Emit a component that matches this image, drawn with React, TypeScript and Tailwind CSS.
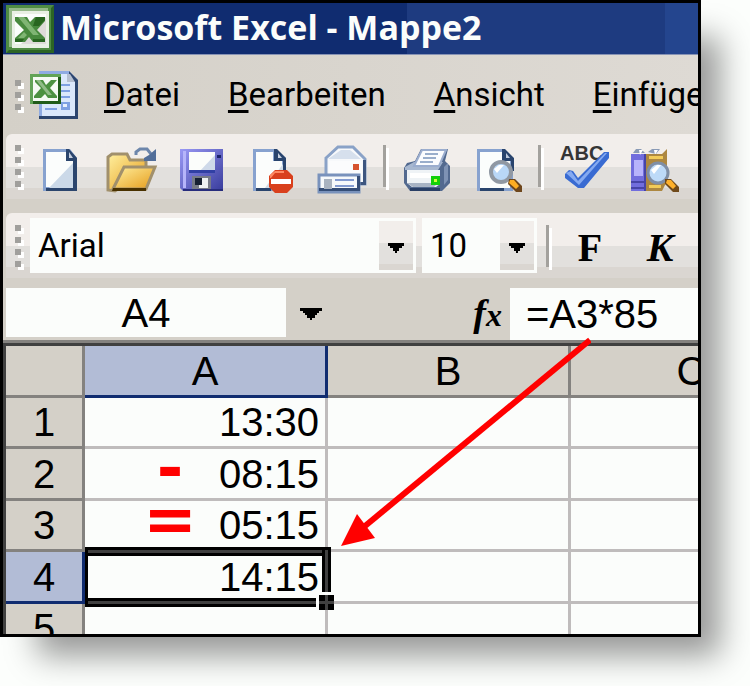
import { useState } from 'react';
import type { ReactNode } from 'react';

type IconProps = { children: ReactNode };

function Icon({ children }: IconProps) {
  return (
    <svg viewBox="0 0 48 48" className="h-12 w-12 shrink-0 overflow-visible" aria-hidden="true">
      {children}
    </svg>
  );
}

function AppIcon() {
  return (
    <Icon>
      <rect width="48" height="48" fill="#4f8c42" />
      <path d="M0 48h48V0l-3 3v42H3z" fill="#2c6424" />
      <path d="M3 3h39v3H6v36H3z" fill="#93b887" />
      <rect x="6" y="6" width="37" height="37" fill="#e9f0e4" />
      <rect x="9" y="9" width="31" height="30" fill="#fbfdfb" />
      <path d="M40 12v27H15z" fill="#dedbd8" />
      <path
        d="M9 12h12l3 5 5-5h10v4l-8 9 8 8v4H27l-4-5-4 5H9v-4l9-8-9-9z"
        fill="#47893d"
      />
      <path d="M12 12h6l15 18h-6zM12 33l6-6 3 3-3 3z" fill="#7fb573" />
      <path d="M30 12h9v3l-6 6h-6zM9 34h9l-2 3H9zM27 34h12v3H27z" fill="#28651f" />
    </Icon>
  );
}

function WorkbookIcon() {
  return (
    <Icon>
      <path d="M9 0h30l9 9v39H9z" fill="#8fabe2" />
      <path d="M12 3h25v8h8v34H12z" fill="#dbe8fb" />
      <path d="M39 0l9 9v39H9v-3h36V11h-6z" fill="#2c456e" />
      <path d="M37 3l3 0 5 8h-8z" fill="#b5bfd0" />
      <path d="M31 13h9v2h-9zM31 19h9v2h-9zM31 25h9v2h-9zM31 31h9v8h-9zM15 37h12v2H15z" fill="#7fa1e3" />
      <rect x="33" y="33" width="4" height="3" fill="#e8f0fd" />
      <rect y="3" width="31" height="30" fill="#37822d" />
      <path d="M0 3h31v3H3v27H0z" fill="#62a356" />
      <path d="M28 6h3v27H3v-3h25z" fill="#205c19" />
      <rect x="3" y="6" width="25" height="24" fill="#f5faf3" />
      <path d="M5 9h8l3 5 5-5h6l-7 8 7 8v2h-9l-3-4-4 4H4v-2l7-8-6-6z" fill="#4c9140" />
      <path d="M6 9h4l12 15h-4z" fill="#91bc87" />
    </Icon>
  );
}

function NewIcon() {
  return (
    <Icon>
      <path d="M7 4h27l7 9v33H7z" fill="#87a2cf" />
      <path d="M10 7h20v9h8v26H10z" fill="#fbfdfc" />
      <path d="M38 17v26H13z" fill="#cbd9e8" />
      <path d="M30 4h3l8 9v33H10v-3h27V16h-7z" fill="#2b456d" />
      <path d="M33 7l4 6h-4z" fill="#c5cfdf" />
    </Icon>
  );
}

function OpenIcon() {
  return (
    <Icon>
      <defs>
        <linearGradient id="folder" x2="1" y2="1">
          <stop stopColor="#fff0a0" />
          <stop offset="1" stopColor="#e69b18" />
        </linearGradient>
      </defs>
      <path d="M1 45V12l4-3h15l3 6h16v9L8 46z" fill="url(#folder)" stroke="#a1906c" strokeWidth="3" />
      <path d="M6 44l11-22h31l-9 22z" fill="url(#folder)" stroke="#a1906c" strokeWidth="3" />
      <path d="M6 43h33v3H5z" fill="#493100" />
      <path d="M29 10v-3l4-3h7l4 5" fill="none" stroke="#6d86ab" strokeWidth="3" />
      <path d="M49 4v12H37v-3l5-3z" fill="#526e99" />
    </Icon>
  );
}

function SaveIcon() {
  return (
    <Icon>
      <defs>
        <linearGradient id="disk" x2="1" y2="1">
          <stop stopColor="#9a99f5" />
          <stop offset="1" stopColor="#383c9c" />
        </linearGradient>
      </defs>
      <path d="M2 4h43v42H5l-3-3z" fill="url(#disk)" />
      <path d="M5 6h3v37H5z" fill="#b6b5fa" />
      <path d="M11 7h26v20H11z" fill="#fbfdfb" />
      <path d="M37 10v17H21z" fill="#ced9e9" />
      <path d="M11 25h26v3H11z" fill="#3140a4" />
      <path d="M39 10h4v3h-4z" fill="#1c246b" />
      <path d="M14 31h19v13H14z" fill="#777b88" />
      <path d="M17 33h7v7h-7z" fill="#172033" />
      <path d="M24 33h6v10h-9v-3h3z" fill="#eef1f3" />
      <path d="M5 44h40v2H5z" fill="#272c7c" />
    </Icon>
  );
}

function PermissionIcon() {
  return (
    <Icon>
      <path d="M4 4h23l10 9v33H4z" fill="#87a2cf" />
      <path d="M7 7h17v9h9v27H7z" fill="#fbfdfc" />
      <path d="M34 19v24H16z" fill="#d0dce8" />
      <path d="M25 4h3l9 9v12h-3v-9h-9zM7 43h15v3H7z" fill="#29446d" />
      <path d="M29 8l4 5h-4z" fill="#c6d0df" />
      <path d="M26 25h12l6 6v11l-6 6H26l-6-6V31z" fill="#d9401d" />
      <path d="M26 26h9v2h-9l-4 5h-1v-3z" fill="#ff8962" />
      <path d="M22 34h20v5H22z" fill="#fff" />
    </Icon>
  );
}

function MailIcon() {
  return (
    <Icon>
      <path d="M6 13L18 2h15l12 12v25H6z" fill="#f7f9fb" stroke="#8aa2c7" strokeWidth="3" />
      <path d="M8 14l13-9h9l11 9z" fill="#d6e0ed" />
      <path d="M9 16h33v15H9z" fill="#fbfcfd" />
      <path d="M43 15h3v25h-6v-3h3z" fill="#3d5680" />
      <path d="M33 19h6v6h-6z" fill="#d6532e" />
      <path d="M-1 30h40v17H-1z" fill="#f6f9fb" stroke="#7992bc" strokeWidth="3" />
      <path d="M-1 46h41V31h-3v12H-1z" fill="#354e78" />
      <path d="M4 34h8v10H4z" fill="#a9b3c0" />
      <path d="M15 34h19v2H15zM15 40h19v2H15z" fill="#839bd0" />
    </Icon>
  );
}

function PrintIcon() {
  return (
    <Icon>
      <path d="M0 23l3-5 8-2 6-12h27l-3 12 5 5v17l-8 8H6l-6-8z" fill="#52698f" />
      <path d="M1 22l9-5h29l-5 8H1z" fill="#a8b8d0" />
      <path d="M18 5h24l-7 16H10z" fill="#fbfcfe" stroke="#9badce" strokeWidth="2" />
      <path d="M21 9h13M19 13h13M16 17h13" stroke="#9aaecb" strokeWidth="2" />
      <path d="M3 25h33v14l-4 3H8l-5-4z" fill="#eff3f6" />
      <path d="M6 28h21v5H6z" fill="#fff" />
      <path d="M3 38h31l-4 4H9z" fill="#a8b4c5" />
      <path d="M27 31h9v9h-9z" fill="#12cf08" />
      <path d="M30 34h3v3h-3z" fill="#ccff38" />
      <path d="M6 43h30v3H6z" fill="#293f66" />
      <path d="M40 22l4-4v17l-4 5z" fill="#7e92b4" />
    </Icon>
  );
}

function PreviewIcon() {
  return (
    <Icon>
      <path d="M2 4h27l9 9v33H2z" fill="#87a2cf" />
      <path d="M5 7h22v9h8v27H5z" fill="#fbfdfc" />
      <path d="M27 4h3l9 9v13h-3V16h-9zM5 43h24v3H5z" fill="#29446d" />
      <path d="M31 8l4 5h-4z" fill="#bfcbdd" />
      <circle cx="26" cy="27" r="10" fill="#b9d7f7" stroke="#9098a3" strokeWidth="4" />
      <path d="M19 24l5-4h5l-7 8z" fill="#fff" />
      <path d="M34 34h6l7 7v6h-6l-8-8z" fill="#6e461c" />
      <path d="M35 35h4l5 6-3 3-7-6z" fill="#ffae23" />
    </Icon>
  );
}

function SpellingIcon() {
  return (
    <Icon>
      <text x="1" y="15" fontSize="20" fontWeight="bold" fill="#353535" className="font-['Liberation_Sans']">
        ABC
      </text>
      <path d="M6 29l4-4 4 1 5 7L45 7h5v6L25 43h-6L6 33z" fill="#396bd2" />
      <path d="M7 28l5-2 7 10L46 8l2 0-28 32z" fill="#85aaf1" />
    </Icon>
  );
}

function ResearchIcon() {
  return (
    <Icon>
      <path d="M1 9h15v37H1z" fill="#716ddd" />
      <path d="M4 15h9v16H4z" fill="#b7b3fb" />
      <path d="M1 36h15v2H1zM1 42h15v2H1zM14 9h2v37h-2z" fill="#4744a7" />
      <path d="M3 8l3-4h5l4 4zM18 7l4-3h8l-4 5z" fill="#899ab6" />
      <path d="M9 5l4 0-3 5zM24 5l4 0-3 5z" fill="#fff" />
      <path d="M16 9h16l5-5v32l-5 10H16z" fill="#ad8740" />
      <path d="M19 11h14v3H19zM19 40h12v3H19z" fill="#f2cb58" />
      <circle cx="28" cy="28" r="10" fill="#bddaf8" stroke="#7f8ea5" strokeWidth="3" />
      <path d="M21 25l6-5h4l-7 9z" fill="#fff" />
      <path d="M35 34h6l8 8v5h-6l-8-8z" fill="#704a1b" />
      <path d="M37 35h4l5 6-3 3-7-6z" fill="#ffb12b" />
    </Icon>
  );
}

function Grip({ dots }: { dots: number }) {
  return (
    <div className="flex w-[6px] shrink-0 flex-col gap-[6px]">
      {Array.from({ length: dots }, (_, i) => (
        <span key={i} className="h-[6px] w-[6px] bg-[#a09f9c] shadow-[3px_3px_0_#ffffff]" />
      ))}
    </div>
  );
}

function Separator() {
  return <div className="mr-[6px] ml-1 h-[42px] w-[3px] shrink-0 bg-[#a3a19d] shadow-[3px_3px_0_#ffffff]" />;
}

function Caret() {
  return (
    <svg viewBox="0 0 16 10" className="h-[10px] w-4" aria-hidden="true">
      <path d="M0 0h16v3h-2v2h-3v3H9v2H7V8H5V5H2V3H0z" />
    </svg>
  );
}

function ToolButton({ label, children }: { label: string; children: ReactNode }) {
  return (
    <button type="button" aria-label={label} className="flex w-[71px] shrink-0 justify-center">
      {children}
    </button>
  );
}

type ComboProps = {
  label: string;
  options: string[];
  className: string;
};

function Combo({ label, options, className }: ComboProps) {
  return (
    <div className={`relative h-[55px] shrink-0 bg-[#fbfdfb] ${className}`}>
      <select
        aria-label={label}
        className="h-full w-full appearance-none bg-transparent pt-px pl-2 text-[33px] leading-10 outline-none"
      >
        {options.map((o) => (
          <option key={o}>{o}</option>
        ))}
      </select>
      <span className="pointer-events-none absolute inset-y-[3px] right-[3px] flex w-[34px] items-center justify-center bg-[linear-gradient(#f2eeeb_0_22px,#e2e0dd_22px_43px,#dad6d1_43px)] pt-1">
        <Caret />
      </span>
    </div>
  );
}

const toolbarBg =
  'bg-[linear-gradient(#f2eeeb_0_33px,#e2e0dd_33px_54px,#dad6d1_54px)] rounded-tl-md';

const rows = [
  { id: 1, op: '', value: '13:30' },
  { id: 2, op: '-', value: '08:15' },
  { id: 3, op: '=', value: '05:15' },
  { id: 4, op: '', value: '14:15' },
];

function Selection() {
  return (
    <div className="pointer-events-none absolute -top-[5px] -right-[6px] -bottom-[6px] left-0 z-10 border-y-[9px] border-r-[9px] border-l-[3px] border-black">
      <span className="absolute -top-[6px] right-0 left-0 h-[3px] bg-[#404040]" />
      <span className="absolute right-0 -bottom-[6px] left-0 h-[3px] bg-[#404040]" />
      <span className="absolute -top-[6px] -right-[6px] bottom-0 w-[3px] bg-[#404040]" />
      <span className="absolute -right-[12px] -bottom-[12px] h-[18px] w-[18px] bg-[#fbfdfb]" />
      <span className="absolute -right-[12px] -bottom-[12px] h-[15px] w-[15px] bg-black" />
      <span className="absolute -right-[12px] -bottom-[6px] h-[3px] w-[15px] bg-[#404040]" />
      <span className="absolute -right-[6px] -bottom-[12px] h-[15px] w-[3px] bg-[#404040]" />
    </div>
  );
}

function Sheet() {
  const line = 'border-r-[3px] border-b-[3px] border-[#bfbcbc]';
  const head = 'border-r-[3px] border-b-[3px] font-normal';
  const grayHead = 'border-[#84827f] bg-[#d4d0c8]';
  const activeHead = 'border-[#102c70] bg-[#b2bcd6]';

  return (
    <table className="w-[808px] table-fixed border-separate border-spacing-0 border-l-[3px] border-[#404040] text-[40px] leading-[48px]">
      <colgroup>
        <col className="w-[79px]" />
        <col className="w-[243px]" />
        <col className="w-[243px]" />
        <col className="w-[243px]" />
      </colgroup>
      <thead>
        <tr className="h-[52px]">
          <td className={`${head} ${grayHead}`} />
          <th scope="col" className={`${head} ${activeHead}`}>A</th>
          <th scope="col" className={`${head} ${grayHead}`}>B</th>
          <th scope="col" className={`${head} ${grayHead}`}>C</th>
        </tr>
      </thead>
      <tbody>
        {rows.map((row) => {
          const active = row.id === 4;
          return (
            <tr key={row.id} className={row.id % 2 ? 'h-[51px]' : 'h-[52px]'}>
              <th scope="row" className={`${head} ${active ? activeHead : grayHead}`}>
                {row.id}
              </th>
              <td className={`relative ${line}`}>
                <div className="flex h-12 items-start justify-end pr-[6px]">
                  {row.op && (
                    <span className="ml-9 flex-1 text-center font-['DejaVu_Sans',sans-serif] text-[64px] leading-[36px] font-bold text-[#ff0000]">
                      {row.op}
                    </span>
                  )}
                  <span>{row.value}</span>
                </div>
                {active && <Selection />}
              </td>
              <td className={line} />
              <td className={line} />
            </tr>
          );
        })}
        <tr>
          <th scope="row" className="border-r-[3px] border-[#84827f] bg-[#d4d0c8] font-normal">
            <div className="h-[30px] overflow-hidden">5</div>
          </th>
          <td className="border-r-[3px] border-[#bfbcbc]" />
          <td className="border-r-[3px] border-[#bfbcbc]" />
          <td />
        </tr>
      </tbody>
    </table>
  );
}

export default function App() {
  const [cell, setCell] = useState('A4');
  const [formula, setFormula] = useState('=A3*85');

  return (
    <div className="overflow-hidden bg-[#fcfefc] pr-[49px] pb-[49px] font-['Liberation_Sans',Arial,sans-serif] text-black">
      <div className="relative border-[3px] border-black shadow-[28px_28px_30px_-9px_rgba(0,0,0,0.4)]">
        <div className="overflow-hidden bg-[#fbfdfb]">
          <header className="flex h-[52px] items-center gap-[6px] border-b border-[#8793b5] bg-[linear-gradient(90deg,#102c70_0_404px,#1e3b80_404px_662px,#24458e_662px)] pl-[3px]">
            <AppIcon />
            <h1 className="pb-1 font-['Open_Sans',sans-serif] text-[34px] leading-10 font-bold whitespace-nowrap text-[#fbfdfb]">
              Microsoft Excel - Mappe2
            </h1>
          </header>

          <div className="bg-[#d4d0c8] font-[Roboto,sans-serif]">
            <nav className="flex h-[79px] items-center bg-linear-to-r from-[#d4d0c8] to-[#dedad4] pl-3 text-[33px] leading-10">
              <Grip dots={3} />
              <div className="ml-[9px]">
                <WorkbookIcon />
              </div>
              <div className="ml-[26px] flex gap-12 whitespace-nowrap [&_u]:decoration-[3px] [&_u]:underline-offset-4">
                <button type="button"><u>D</u>atei</button>
                <button type="button"><u>B</u>earbeiten</button>
                <button type="button"><u>A</u>nsicht</button>
                <button type="button">
                  <u>E</u>infü<u>g</u>en
                </button>
              </div>
            </nav>

            <div className="pl-[3px]">
              <div className={`flex h-[65px] items-start pt-[11px] pl-[9px] ${toolbarBg}`} role="toolbar" aria-label="Standard">
                <Grip dots={4} />
                <div className="ml-[3px] flex items-start">
                  <ToolButton label="Neu"><NewIcon /></ToolButton>
                  <ToolButton label="Öffnen"><OpenIcon /></ToolButton>
                  <ToolButton label="Speichern"><SaveIcon /></ToolButton>
                  <ToolButton label="Berechtigung"><PermissionIcon /></ToolButton>
                  <ToolButton label="E-Mail"><MailIcon /></ToolButton>
                  <Separator />
                  <ToolButton label="Drucken"><PrintIcon /></ToolButton>
                  <ToolButton label="Seitenansicht"><PreviewIcon /></ToolButton>
                  <Separator />
                  <ToolButton label="Rechtschreibung"><SpellingIcon /></ToolButton>
                  <ToolButton label="Recherchieren"><ResearchIcon /></ToolButton>
                </div>
              </div>
              <div className={`mt-[14px] flex h-[65px] items-center pl-[9px] ${toolbarBg}`} role="toolbar" aria-label="Format">
                <Grip dots={4} />
                <Combo label="Schriftart" options={['Arial', 'Tahoma', 'Verdana']} className="ml-[9px] w-[386px]" />
                <Combo label="Schriftgrad" options={['10', '11', '12']} className="mr-[5px] ml-[6px] w-[115px]" />
                <Separator />
                <button type="button" aria-label="Fett" className="w-[70px] pt-1 font-['Liberation_Serif',serif] text-[40px] leading-10 font-bold">
                  F
                </button>
                <button type="button" aria-label="Kursiv" className="w-[70px] pt-1 font-['Liberation_Serif',serif] text-[40px] leading-10 font-bold italic">
                  K
                </button>
              </div>
            </div>
          </div>

          <div className="flex h-[68px] border-b-[3px] border-[#404040] bg-[#d4d0c8] pt-[10px] pl-[3px] text-[40px]">
            <input
              aria-label="Namenfeld"
              value={cell}
              onChange={(e) => setCell(e.target.value)}
              className="h-[49px] w-[280px] shrink-0 bg-[#fbfdfb] text-center outline-none"
            />
            <button type="button" aria-label="Namen anzeigen" className="ml-[14px] flex h-[52px] items-center">
              <svg viewBox="0 0 22 12" className="h-3 w-[22px]" aria-hidden="true">
                <path d="M0 0h22v3h-3v2h-2v2h-2v3h-3v2h-2v-2H7V7H5V5H3V3H0z" />
              </svg>
            </button>
            <button
              type="button"
              aria-label="Funktion einfügen"
              className="ml-auto h-[52px] pr-2 pl-4 font-['Liberation_Serif',serif] text-[38px] leading-[48px] font-bold italic"
            >
              f<span className="text-[32px]">x</span>
            </button>
            <input
              aria-label="Bearbeitungsleiste"
              value={formula}
              onChange={(e) => setFormula(e.target.value)}
              className="h-[52px] w-[188px] bg-[#fbfdfb] pl-4 outline-none"
            />
          </div>
          <div className="-mt-[6px] mb-[3px] h-[3px] bg-[#84827f]" />

          <Sheet />
        </div>

        {/* arrow from the formula to the result cell */}
        <svg
          viewBox="0 0 250 212"
          className="pointer-events-none absolute top-[333px] left-[338px] z-20 h-[212px] w-[250px]"
          aria-hidden="true"
        >
          <path d="M249 4L18 195" stroke="#ff0000" strokeWidth="6" />
          <path d="M0 210L16 178L34 202z" fill="#ff0000" />
        </svg>
      </div>
    </div>
  );
}
